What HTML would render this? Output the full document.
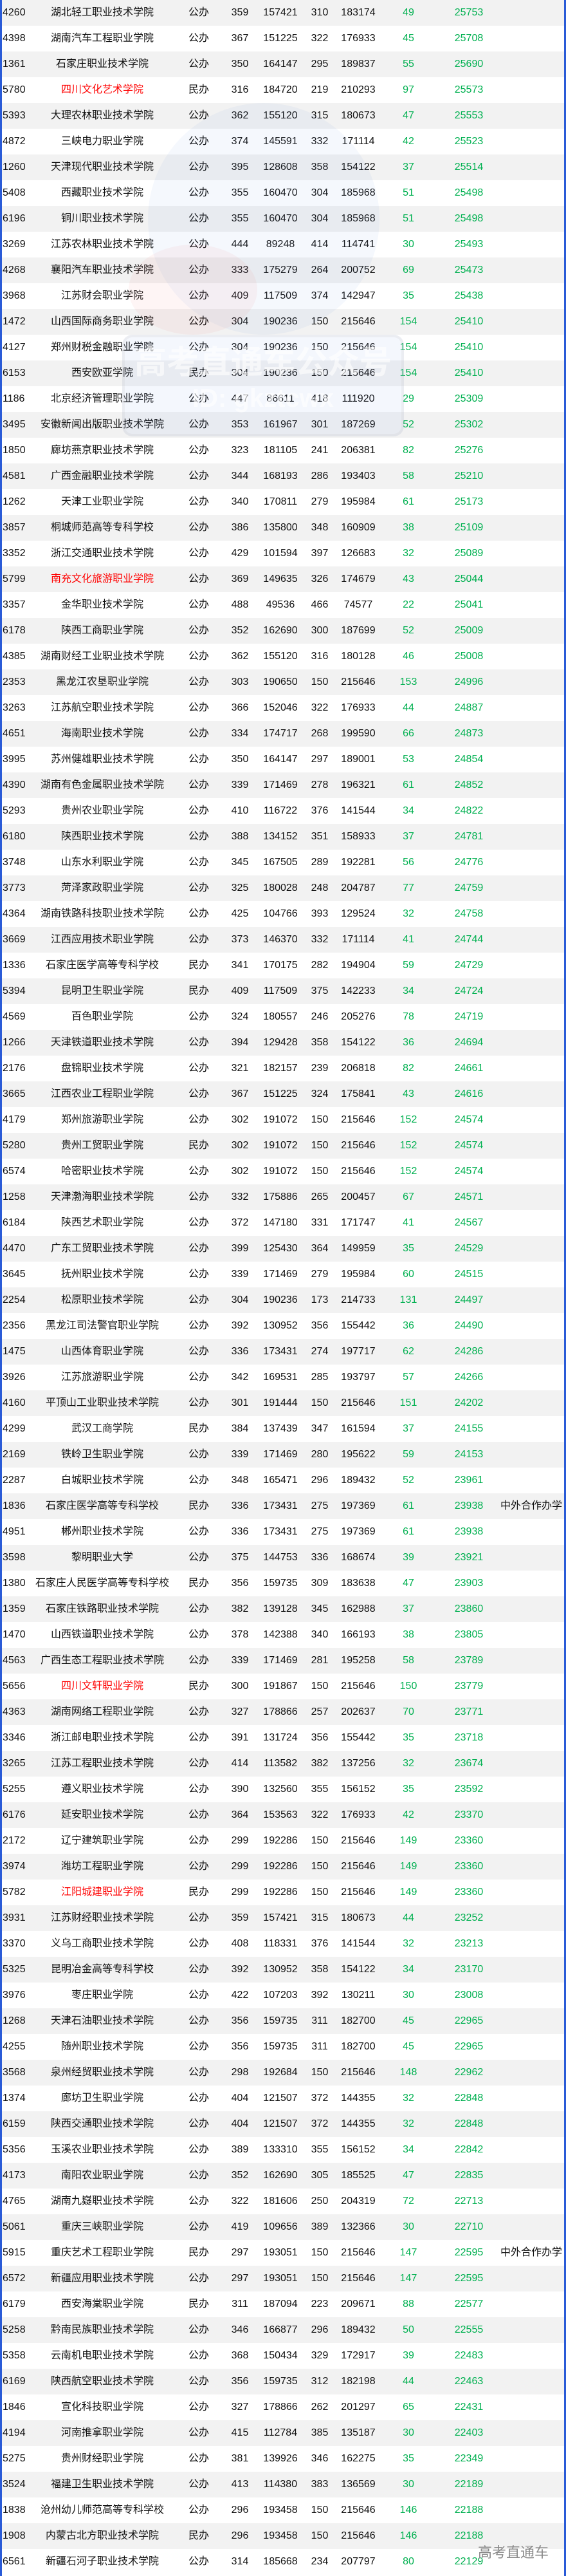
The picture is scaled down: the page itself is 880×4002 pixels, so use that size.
<!DOCTYPE html>
<html><head><meta charset="utf-8">
<style>
html,body{margin:0;padding:0;background:#fff;}
body{width:880px;height:4002px;position:relative;overflow:hidden;font-family:"Liberation Sans","Noto Sans CJK SC",sans-serif;font-size:16px;color:#111;}
.bl{position:absolute;left:0;top:0;width:3px;height:4002px;background:#2a5bd7;z-index:5}
.br{position:absolute;right:0;top:0;width:3px;height:4002px;background:#2a5bd7;z-index:5}
.r{position:relative;height:40px;line-height:40px;white-space:nowrap}
.r:nth-child(odd){background:#f2f2f2}
.r span{position:absolute;top:0;text-align:center}
.r span:nth-child(1){left:4px;text-align:left}
.r span:nth-child(2){left:39px;width:240px}
.r span:nth-child(3){left:279px;width:60px}
.r span:nth-child(4){left:343px;width:60px}
.r span:nth-child(5){left:401px;width:70px}
.r span:nth-child(6){left:467px;width:60px}
.r span:nth-child(7){left:522px;width:70px}
.r span:nth-child(8){left:605px;width:60px;color:#00b050}
.r span:nth-child(9){left:694px;width:70px;color:#00b050}
.r span:nth-child(10){left:778px;text-align:left}
.r span.red{color:#ff0000}
.wm{position:absolute;z-index:3;pointer-events:none}
</style></head><body>
<div class="bl"></div><div class="br"></div>
<div class="wm" style="left:230px;top:160px;width:360px;height:360px;border-radius:50%;background:rgba(120,150,220,0.07)"></div>
<div class="wm" style="left:200px;top:380px;width:200px;height:140px;border-radius:50%;background:rgba(230,90,90,0.06)"></div>
<div class="wm" style="left:190px;top:520px;width:430px;height:150px;border-radius:16px;background:rgba(120,150,230,0.08);border:4px solid rgba(200,200,200,0.2);color:rgba(255,255,255,0.6);font-weight:bold;text-align:center;font-size:50px;line-height:70px;font-family:'Noto Sans CJK SC',sans-serif">高考直通车公众号<div style="font-size:40px;line-height:50px;font-family:'Liberation Sans',sans-serif">ID: gkztcwx</div></div>
<div class="wm" style="left:743px;top:3948px;font-size:22px;color:#8a8a8a;text-shadow:0 0 2px #fff">高考直通车</div>
<div id="t">
<div class="r"><span>4260</span><span>湖北轻工职业技术学院</span><span>公办</span><span>359</span><span>157421</span><span>310</span><span>183174</span><span>49</span><span>25753</span></div>
<div class="r"><span>4398</span><span>湖南汽车工程职业学院</span><span>公办</span><span>367</span><span>151225</span><span>322</span><span>176933</span><span>45</span><span>25708</span></div>
<div class="r"><span>1361</span><span>石家庄职业技术学院</span><span>公办</span><span>350</span><span>164147</span><span>295</span><span>189837</span><span>55</span><span>25690</span></div>
<div class="r"><span>5780</span><span class="red">四川文化艺术学院</span><span>民办</span><span>316</span><span>184720</span><span>219</span><span>210293</span><span>97</span><span>25573</span></div>
<div class="r"><span>5393</span><span>大理农林职业技术学院</span><span>公办</span><span>362</span><span>155120</span><span>315</span><span>180673</span><span>47</span><span>25553</span></div>
<div class="r"><span>4872</span><span>三峡电力职业学院</span><span>公办</span><span>374</span><span>145591</span><span>332</span><span>171114</span><span>42</span><span>25523</span></div>
<div class="r"><span>1260</span><span>天津现代职业技术学院</span><span>公办</span><span>395</span><span>128608</span><span>358</span><span>154122</span><span>37</span><span>25514</span></div>
<div class="r"><span>5408</span><span>西藏职业技术学院</span><span>公办</span><span>355</span><span>160470</span><span>304</span><span>185968</span><span>51</span><span>25498</span></div>
<div class="r"><span>6196</span><span>铜川职业技术学院</span><span>公办</span><span>355</span><span>160470</span><span>304</span><span>185968</span><span>51</span><span>25498</span></div>
<div class="r"><span>3269</span><span>江苏农林职业技术学院</span><span>公办</span><span>444</span><span>89248</span><span>414</span><span>114741</span><span>30</span><span>25493</span></div>
<div class="r"><span>4268</span><span>襄阳汽车职业技术学院</span><span>公办</span><span>333</span><span>175279</span><span>264</span><span>200752</span><span>69</span><span>25473</span></div>
<div class="r"><span>3968</span><span>江苏财会职业学院</span><span>公办</span><span>409</span><span>117509</span><span>374</span><span>142947</span><span>35</span><span>25438</span></div>
<div class="r"><span>1472</span><span>山西国际商务职业学院</span><span>公办</span><span>304</span><span>190236</span><span>150</span><span>215646</span><span>154</span><span>25410</span></div>
<div class="r"><span>4127</span><span>郑州财税金融职业学院</span><span>公办</span><span>304</span><span>190236</span><span>150</span><span>215646</span><span>154</span><span>25410</span></div>
<div class="r"><span>6153</span><span>西安欧亚学院</span><span>民办</span><span>304</span><span>190236</span><span>150</span><span>215646</span><span>154</span><span>25410</span></div>
<div class="r"><span>1186</span><span>北京经济管理职业学院</span><span>公办</span><span>447</span><span>86611</span><span>418</span><span>111920</span><span>29</span><span>25309</span></div>
<div class="r"><span>3495</span><span>安徽新闻出版职业技术学院</span><span>公办</span><span>353</span><span>161967</span><span>301</span><span>187269</span><span>52</span><span>25302</span></div>
<div class="r"><span>1850</span><span>廊坊燕京职业技术学院</span><span>公办</span><span>323</span><span>181105</span><span>241</span><span>206381</span><span>82</span><span>25276</span></div>
<div class="r"><span>4581</span><span>广西金融职业技术学院</span><span>公办</span><span>344</span><span>168193</span><span>286</span><span>193403</span><span>58</span><span>25210</span></div>
<div class="r"><span>1262</span><span>天津工业职业学院</span><span>公办</span><span>340</span><span>170811</span><span>279</span><span>195984</span><span>61</span><span>25173</span></div>
<div class="r"><span>3857</span><span>桐城师范高等专科学校</span><span>公办</span><span>386</span><span>135800</span><span>348</span><span>160909</span><span>38</span><span>25109</span></div>
<div class="r"><span>3352</span><span>浙江交通职业技术学院</span><span>公办</span><span>429</span><span>101594</span><span>397</span><span>126683</span><span>32</span><span>25089</span></div>
<div class="r"><span>5799</span><span class="red">南充文化旅游职业学院</span><span>公办</span><span>369</span><span>149635</span><span>326</span><span>174679</span><span>43</span><span>25044</span></div>
<div class="r"><span>3357</span><span>金华职业技术学院</span><span>公办</span><span>488</span><span>49536</span><span>466</span><span>74577</span><span>22</span><span>25041</span></div>
<div class="r"><span>6178</span><span>陕西工商职业学院</span><span>公办</span><span>352</span><span>162690</span><span>300</span><span>187699</span><span>52</span><span>25009</span></div>
<div class="r"><span>4385</span><span>湖南财经工业职业技术学院</span><span>公办</span><span>362</span><span>155120</span><span>316</span><span>180128</span><span>46</span><span>25008</span></div>
<div class="r"><span>2353</span><span>黑龙江农垦职业学院</span><span>公办</span><span>303</span><span>190650</span><span>150</span><span>215646</span><span>153</span><span>24996</span></div>
<div class="r"><span>3263</span><span>江苏航空职业技术学院</span><span>公办</span><span>366</span><span>152046</span><span>322</span><span>176933</span><span>44</span><span>24887</span></div>
<div class="r"><span>4651</span><span>海南职业技术学院</span><span>公办</span><span>334</span><span>174717</span><span>268</span><span>199590</span><span>66</span><span>24873</span></div>
<div class="r"><span>3995</span><span>苏州健雄职业技术学院</span><span>公办</span><span>350</span><span>164147</span><span>297</span><span>189001</span><span>53</span><span>24854</span></div>
<div class="r"><span>4390</span><span>湖南有色金属职业技术学院</span><span>公办</span><span>339</span><span>171469</span><span>278</span><span>196321</span><span>61</span><span>24852</span></div>
<div class="r"><span>5293</span><span>贵州农业职业学院</span><span>公办</span><span>410</span><span>116722</span><span>376</span><span>141544</span><span>34</span><span>24822</span></div>
<div class="r"><span>6180</span><span>陕西职业技术学院</span><span>公办</span><span>388</span><span>134152</span><span>351</span><span>158933</span><span>37</span><span>24781</span></div>
<div class="r"><span>3748</span><span>山东水利职业学院</span><span>公办</span><span>345</span><span>167505</span><span>289</span><span>192281</span><span>56</span><span>24776</span></div>
<div class="r"><span>3773</span><span>菏泽家政职业学院</span><span>公办</span><span>325</span><span>180028</span><span>248</span><span>204787</span><span>77</span><span>24759</span></div>
<div class="r"><span>4364</span><span>湖南铁路科技职业技术学院</span><span>公办</span><span>425</span><span>104766</span><span>393</span><span>129524</span><span>32</span><span>24758</span></div>
<div class="r"><span>3669</span><span>江西应用技术职业学院</span><span>公办</span><span>373</span><span>146370</span><span>332</span><span>171114</span><span>41</span><span>24744</span></div>
<div class="r"><span>1336</span><span>石家庄医学高等专科学校</span><span>民办</span><span>341</span><span>170175</span><span>282</span><span>194904</span><span>59</span><span>24729</span></div>
<div class="r"><span>5394</span><span>昆明卫生职业学院</span><span>民办</span><span>409</span><span>117509</span><span>375</span><span>142233</span><span>34</span><span>24724</span></div>
<div class="r"><span>4569</span><span>百色职业学院</span><span>公办</span><span>324</span><span>180557</span><span>246</span><span>205276</span><span>78</span><span>24719</span></div>
<div class="r"><span>1266</span><span>天津铁道职业技术学院</span><span>公办</span><span>394</span><span>129428</span><span>358</span><span>154122</span><span>36</span><span>24694</span></div>
<div class="r"><span>2176</span><span>盘锦职业技术学院</span><span>公办</span><span>321</span><span>182157</span><span>239</span><span>206818</span><span>82</span><span>24661</span></div>
<div class="r"><span>3665</span><span>江西农业工程职业学院</span><span>公办</span><span>367</span><span>151225</span><span>324</span><span>175841</span><span>43</span><span>24616</span></div>
<div class="r"><span>4179</span><span>郑州旅游职业学院</span><span>公办</span><span>302</span><span>191072</span><span>150</span><span>215646</span><span>152</span><span>24574</span></div>
<div class="r"><span>5280</span><span>贵州工贸职业学院</span><span>民办</span><span>302</span><span>191072</span><span>150</span><span>215646</span><span>152</span><span>24574</span></div>
<div class="r"><span>6574</span><span>哈密职业技术学院</span><span>公办</span><span>302</span><span>191072</span><span>150</span><span>215646</span><span>152</span><span>24574</span></div>
<div class="r"><span>1258</span><span>天津渤海职业技术学院</span><span>公办</span><span>332</span><span>175886</span><span>265</span><span>200457</span><span>67</span><span>24571</span></div>
<div class="r"><span>6184</span><span>陕西艺术职业学院</span><span>公办</span><span>372</span><span>147180</span><span>331</span><span>171747</span><span>41</span><span>24567</span></div>
<div class="r"><span>4470</span><span>广东工贸职业技术学院</span><span>公办</span><span>399</span><span>125430</span><span>364</span><span>149959</span><span>35</span><span>24529</span></div>
<div class="r"><span>3645</span><span>抚州职业技术学院</span><span>公办</span><span>339</span><span>171469</span><span>279</span><span>195984</span><span>60</span><span>24515</span></div>
<div class="r"><span>2254</span><span>松原职业技术学院</span><span>公办</span><span>304</span><span>190236</span><span>173</span><span>214733</span><span>131</span><span>24497</span></div>
<div class="r"><span>2356</span><span>黑龙江司法警官职业学院</span><span>公办</span><span>392</span><span>130952</span><span>356</span><span>155442</span><span>36</span><span>24490</span></div>
<div class="r"><span>1475</span><span>山西体育职业学院</span><span>公办</span><span>336</span><span>173431</span><span>274</span><span>197717</span><span>62</span><span>24286</span></div>
<div class="r"><span>3926</span><span>江苏旅游职业学院</span><span>公办</span><span>342</span><span>169531</span><span>285</span><span>193797</span><span>57</span><span>24266</span></div>
<div class="r"><span>4160</span><span>平顶山工业职业技术学院</span><span>公办</span><span>301</span><span>191444</span><span>150</span><span>215646</span><span>151</span><span>24202</span></div>
<div class="r"><span>4299</span><span>武汉工商学院</span><span>民办</span><span>384</span><span>137439</span><span>347</span><span>161594</span><span>37</span><span>24155</span></div>
<div class="r"><span>2169</span><span>铁岭卫生职业学院</span><span>公办</span><span>339</span><span>171469</span><span>280</span><span>195622</span><span>59</span><span>24153</span></div>
<div class="r"><span>2287</span><span>白城职业技术学院</span><span>公办</span><span>348</span><span>165471</span><span>296</span><span>189432</span><span>52</span><span>23961</span></div>
<div class="r"><span>1836</span><span>石家庄医学高等专科学校</span><span>民办</span><span>336</span><span>173431</span><span>275</span><span>197369</span><span>61</span><span>23938</span><span>中外合作办学</span></div>
<div class="r"><span>4951</span><span>郴州职业技术学院</span><span>公办</span><span>336</span><span>173431</span><span>275</span><span>197369</span><span>61</span><span>23938</span></div>
<div class="r"><span>3598</span><span>黎明职业大学</span><span>公办</span><span>375</span><span>144753</span><span>336</span><span>168674</span><span>39</span><span>23921</span></div>
<div class="r"><span>1380</span><span>石家庄人民医学高等专科学校</span><span>民办</span><span>356</span><span>159735</span><span>309</span><span>183638</span><span>47</span><span>23903</span></div>
<div class="r"><span>1359</span><span>石家庄铁路职业技术学院</span><span>公办</span><span>382</span><span>139128</span><span>345</span><span>162988</span><span>37</span><span>23860</span></div>
<div class="r"><span>1470</span><span>山西铁道职业技术学院</span><span>公办</span><span>378</span><span>142388</span><span>340</span><span>166193</span><span>38</span><span>23805</span></div>
<div class="r"><span>4563</span><span>广西生态工程职业技术学院</span><span>公办</span><span>339</span><span>171469</span><span>281</span><span>195258</span><span>58</span><span>23789</span></div>
<div class="r"><span>5656</span><span class="red">四川文轩职业学院</span><span>民办</span><span>300</span><span>191867</span><span>150</span><span>215646</span><span>150</span><span>23779</span></div>
<div class="r"><span>4363</span><span>湖南网络工程职业学院</span><span>公办</span><span>327</span><span>178866</span><span>257</span><span>202637</span><span>70</span><span>23771</span></div>
<div class="r"><span>3346</span><span>浙江邮电职业技术学院</span><span>公办</span><span>391</span><span>131724</span><span>356</span><span>155442</span><span>35</span><span>23718</span></div>
<div class="r"><span>3265</span><span>江苏工程职业技术学院</span><span>公办</span><span>414</span><span>113582</span><span>382</span><span>137256</span><span>32</span><span>23674</span></div>
<div class="r"><span>5255</span><span>遵义职业技术学院</span><span>公办</span><span>390</span><span>132560</span><span>355</span><span>156152</span><span>35</span><span>23592</span></div>
<div class="r"><span>6176</span><span>延安职业技术学院</span><span>公办</span><span>364</span><span>153563</span><span>322</span><span>176933</span><span>42</span><span>23370</span></div>
<div class="r"><span>2172</span><span>辽宁建筑职业学院</span><span>公办</span><span>299</span><span>192286</span><span>150</span><span>215646</span><span>149</span><span>23360</span></div>
<div class="r"><span>3974</span><span>潍坊工程职业学院</span><span>公办</span><span>299</span><span>192286</span><span>150</span><span>215646</span><span>149</span><span>23360</span></div>
<div class="r"><span>5782</span><span class="red">江阳城建职业学院</span><span>民办</span><span>299</span><span>192286</span><span>150</span><span>215646</span><span>149</span><span>23360</span></div>
<div class="r"><span>3931</span><span>江苏财经职业技术学院</span><span>公办</span><span>359</span><span>157421</span><span>315</span><span>180673</span><span>44</span><span>23252</span></div>
<div class="r"><span>3370</span><span>义乌工商职业技术学院</span><span>公办</span><span>408</span><span>118331</span><span>376</span><span>141544</span><span>32</span><span>23213</span></div>
<div class="r"><span>5325</span><span>昆明冶金高等专科学校</span><span>公办</span><span>392</span><span>130952</span><span>358</span><span>154122</span><span>34</span><span>23170</span></div>
<div class="r"><span>3976</span><span>枣庄职业学院</span><span>公办</span><span>422</span><span>107203</span><span>392</span><span>130211</span><span>30</span><span>23008</span></div>
<div class="r"><span>1268</span><span>天津石油职业技术学院</span><span>公办</span><span>356</span><span>159735</span><span>311</span><span>182700</span><span>45</span><span>22965</span></div>
<div class="r"><span>4255</span><span>随州职业技术学院</span><span>公办</span><span>356</span><span>159735</span><span>311</span><span>182700</span><span>45</span><span>22965</span></div>
<div class="r"><span>3568</span><span>泉州经贸职业技术学院</span><span>公办</span><span>298</span><span>192684</span><span>150</span><span>215646</span><span>148</span><span>22962</span></div>
<div class="r"><span>1374</span><span>廊坊卫生职业学院</span><span>公办</span><span>404</span><span>121507</span><span>372</span><span>144355</span><span>32</span><span>22848</span></div>
<div class="r"><span>6159</span><span>陕西交通职业技术学院</span><span>公办</span><span>404</span><span>121507</span><span>372</span><span>144355</span><span>32</span><span>22848</span></div>
<div class="r"><span>5356</span><span>玉溪农业职业技术学院</span><span>公办</span><span>389</span><span>133310</span><span>355</span><span>156152</span><span>34</span><span>22842</span></div>
<div class="r"><span>4173</span><span>南阳农业职业学院</span><span>公办</span><span>352</span><span>162690</span><span>305</span><span>185525</span><span>47</span><span>22835</span></div>
<div class="r"><span>4765</span><span>湖南九嶷职业技术学院</span><span>公办</span><span>322</span><span>181606</span><span>250</span><span>204319</span><span>72</span><span>22713</span></div>
<div class="r"><span>5061</span><span>重庆三峡职业学院</span><span>公办</span><span>419</span><span>109656</span><span>389</span><span>132366</span><span>30</span><span>22710</span></div>
<div class="r"><span>5915</span><span>重庆艺术工程职业学院</span><span>民办</span><span>297</span><span>193051</span><span>150</span><span>215646</span><span>147</span><span>22595</span><span>中外合作办学</span></div>
<div class="r"><span>6572</span><span>新疆应用职业技术学院</span><span>公办</span><span>297</span><span>193051</span><span>150</span><span>215646</span><span>147</span><span>22595</span></div>
<div class="r"><span>6179</span><span>西安海棠职业学院</span><span>民办</span><span>311</span><span>187094</span><span>223</span><span>209671</span><span>88</span><span>22577</span></div>
<div class="r"><span>5258</span><span>黔南民族职业技术学院</span><span>公办</span><span>346</span><span>166877</span><span>296</span><span>189432</span><span>50</span><span>22555</span></div>
<div class="r"><span>5358</span><span>云南机电职业技术学院</span><span>公办</span><span>368</span><span>150434</span><span>329</span><span>172917</span><span>39</span><span>22483</span></div>
<div class="r"><span>6169</span><span>陕西航空职业技术学院</span><span>公办</span><span>356</span><span>159735</span><span>312</span><span>182198</span><span>44</span><span>22463</span></div>
<div class="r"><span>1846</span><span>宣化科技职业学院</span><span>公办</span><span>327</span><span>178866</span><span>262</span><span>201297</span><span>65</span><span>22431</span></div>
<div class="r"><span>4194</span><span>河南推拿职业学院</span><span>公办</span><span>415</span><span>112784</span><span>385</span><span>135187</span><span>30</span><span>22403</span></div>
<div class="r"><span>5275</span><span>贵州财经职业学院</span><span>公办</span><span>381</span><span>139926</span><span>346</span><span>162275</span><span>35</span><span>22349</span></div>
<div class="r"><span>3524</span><span>福建卫生职业技术学院</span><span>公办</span><span>413</span><span>114380</span><span>383</span><span>136569</span><span>30</span><span>22189</span></div>
<div class="r"><span>1838</span><span>沧州幼儿师范高等专科学校</span><span>公办</span><span>296</span><span>193458</span><span>150</span><span>215646</span><span>146</span><span>22188</span></div>
<div class="r"><span>1908</span><span>内蒙古北方职业技术学院</span><span>民办</span><span>296</span><span>193458</span><span>150</span><span>215646</span><span>146</span><span>22188</span></div>
<div class="r"><span>6561</span><span>新疆石河子职业技术学院</span><span>公办</span><span>314</span><span>185668</span><span>234</span><span>207797</span><span>80</span><span>22129</span></div>
</div>
</body></html>
